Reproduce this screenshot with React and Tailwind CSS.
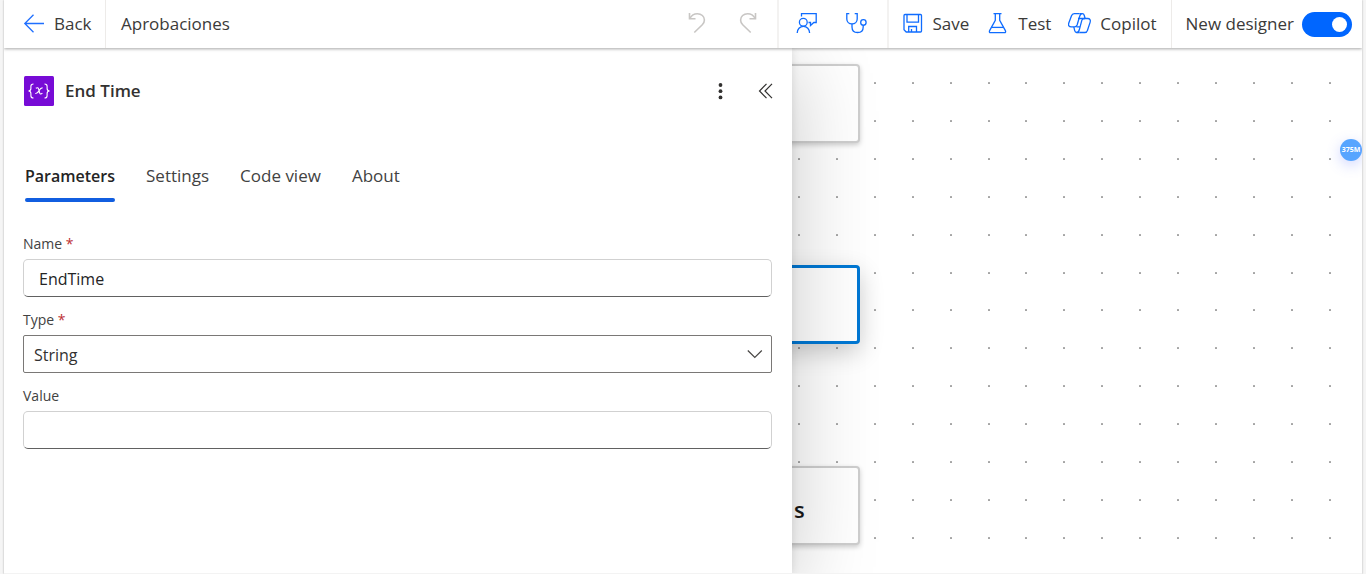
import React, { useState } from 'react';

const TABS = ['Parameters', 'Settings', 'Code view', 'About'];
const GRID_STEP = 37.9;

const Icon = ({ size = 24, className = '', children }) => (
  <svg
    width={size}
    height={size}
    viewBox="0 0 24 24"
    fill="none"
    stroke="currentColor"
    strokeWidth="1.3"
    className={`shrink-0 ${className}`}
    aria-hidden="true"
  >
    {children}
  </svg>
);

const BackIcon = () => (
  <Icon className="text-[#1f6fff]">
    <path d="M22 11.500H2.800M11.500 2.800l-8.700 8.700 8.700 8.700" />
  </Icon>
);

const UndoIcon = () => (
  <Icon>
    <path d="M2.500 1v5.700h6" strokeWidth="1.600" />
    <path d="M2.800 6.500C4.500 3.200 7.300 1.700 10.400 1.700c4 0 7 2.700 7 6.300 0 2-.7 3.400-2.100 4.800L7.300 20.500" strokeWidth="1.600" />
  </Icon>
);

const RedoIcon = () => (
  <Icon>
    <path d="M18.500 1v5.700h-6" strokeWidth="1.600" />
    <path d="M18.200 6.500C16.500 3.200 13.700 1.700 10.600 1.700c-4 0-7 2.700-7 6.300 0 2 .7 3.400 2.100 4.800l8 7.700" strokeWidth="1.600" />
  </Icon>
);

const FeedbackIcon = () => (
  <Icon>
    <path d="M6.500 4.500V1.600h14.700v8.900h-2.400l-3.300 3v-3h-2" />
    <circle cx="8.300" cy="10.300" r="3.900" />
    <path d="M2.200 21c0-3.800 2.700-6.700 6.200-6.700s6.200 2.900 6.200 6.700" />
  </Icon>
);

const CheckerIcon = () => (
  <Icon>
    <path d="M4.300 1.600H1.800v5.400c0 2.900 2.200 4.900 5.200 4.900s5.200-2 5.200-4.900V1.600H9.700" />
    <path d="M7 11.900v3c0 3.400 2.300 5.600 5.600 5.600s5.600-2.200 5.600-5.600v-1.800" />
    <circle cx="18.400" cy="10.400" r="2.700" />
  </Icon>
);

const SaveIcon = () => (
  <Icon>
    <path d="M5 2.500h15.500q1 0 1 1v15.500q0 1-1 1H6.200L4 17.800V3.500q0-1 1-1z" />
    <path d="M7 2.500v7.600h11.500V2.500" />
    <path d="M8.700 20v-5.500h7.800V20M11.500 20v-3" />
  </Icon>
);

const TestIcon = () => (
  <Icon>
    <path d="M7.500 1.700h8M9.300 1.700v6.600L3.500 18.900c-.4.900 0 1.700 1 1.700h14c1 0 1.400-.8 1-1.700L13.700 8.300V1.700" />
    <path d="M5.600 15.400h11.800" />
  </Icon>
);

const CopilotIcon = () => (
  <Icon>
    <path d="M11.500 1.600H6.300c-1.500 0-2.400.7-2.800 2.200L.8 11c-.8 2.400.2 3.900 2.500 3.900h3.300c1.300 0 2.100-.7 2.500-1.900l2.600-8.700c.5-1.700 1.200-2.700 2.600-2.700" />
    <path d="M11.500 1.600h2.800c1.200 0 1.700.7 2 1.900l.8 3" />
    <path d="M11.500 20.500h5.200c1.500 0 2.400-.7 2.800-2.200l2.600-7.900c.8-2.400-.2-3.900-2.500-3.900h-3.300c-1.300 0-2.100.7-2.500 1.900l-2.500 9.400c-.5 1.700-1.200 2.700-2.600 2.700" />
    <path d="M11.500 20.500H8.700c-1.200 0-1.700-.7-2-1.900l-.9-3.700M10 6.500h7M8.500 14.900H12" />
  </Icon>
);

const ToolbarButton = ({ icon, label, className = '' }) => (
  <button type="button" className={`flex items-center gap-2 ${className}`}>
    <span className="text-[#0f6cff]">{icon}</span>
    {label}
  </button>
);

function Header({ newDesigner, setNewDesigner }) {
  return (
    <header className="relative z-20 flex h-12 items-center bg-white text-[17px] text-[#3b3a39] shadow-[0_1px_3px_rgba(0,0,0,0.35)]">
      <button type="button" className="flex h-12 w-[102px] items-center gap-2 border-r border-[#edebe9] pl-[18px]">
        <BackIcon />
        Back
      </button>
      <h1 className="flex-1 pl-[15px]">Aprobaciones</h1>

      <div className="flex h-12 items-center gap-[26px] border-r-2 border-[#f3f2f1] pr-[16px] text-[#c8c6c4]">
        <button type="button" aria-label="Undo" disabled>
          <UndoIcon />
        </button>
        <button type="button" aria-label="Redo" disabled>
          <RedoIcon />
        </button>
      </div>
      <div className="flex h-12 items-center gap-[26px] border-r-2 border-[#f3f2f1] pr-[18px] pl-4 text-[#0f6cff]">
        <button type="button" aria-label="Feedback">
          <FeedbackIcon />
        </button>
        <button type="button" aria-label="Flow checker">
          <CheckerIcon />
        </button>
      </div>
      <div className="flex h-12 items-center gap-[17px] border-r border-[#edebe9] pr-[14px] pl-[11px]">
        <ToolbarButton icon={<SaveIcon />} label="Save" />
        <ToolbarButton icon={<TestIcon />} label="Test" />
        <ToolbarButton icon={<CopilotIcon />} label="Copilot" />
      </div>
      <label className="flex items-center gap-2 pr-[10px] pl-[14px]">
        New designer
        <input
          type="checkbox"
          role="switch"
          checked={newDesigner}
          onChange={(e) => setNewDesigner(e.target.checked)}
          className="h-[25px] w-[50px] appearance-none rounded-full bg-[#8a8886] p-[5px] before:block before:size-[15px] before:rounded-full before:bg-white checked:bg-[#0066ff] checked:before:ml-auto"
        />
      </label>
    </header>
  );
}

function Panel() {
  const [activeTab, setActiveTab] = useState('Parameters');
  const [name, setName] = useState('EndTime');
  const [value, setValue] = useState('');

  const fieldClass =
    'h-[38px] w-full rounded-[5px] border border-[#d1d1d1] border-b-[#616161] bg-white px-[15px] pt-[2px] text-[16px] text-[#242424] outline-none';

  return (
    <section className="relative z-10 w-[58%] shrink-0 bg-white pr-5 pl-[19px] shadow-[0_0_8px_rgba(0,0,0,0.1),0_16px_80px_rgba(0,0,0,0.22)]">
      <div className="flex items-center pt-7">
        <svg width="30" height="30" viewBox="0 0 30 30" className="mr-[11px] ml-px" aria-hidden="true">
          <rect width="30" height="30" rx="1.500" fill="#770bd6" />
          <g fill="none" stroke="#fff" strokeWidth="1.100">
            <path d="M9.500 8c-2.200 0-2.600.8-2.600 2.300v2.300c0 1.500-.7 2.300-2.400 2.400 1.700.1 2.400.9 2.400 2.400v2.300c0 1.500.4 2.300 2.600 2.300" />
            <path d="M20.500 8c2.200 0 2.600.8 2.600 2.300v2.300c0 1.500.7 2.300 2.400 2.400-1.700.1-2.400.9-2.400 2.400v2.300c0 1.500-.4 2.300-2.600 2.300" />
            <path d="M11.800 12.300c1.800-1.200 2.500-.6 3 1.200l.7 2.800c.5 1.900 1.300 2.300 2.900.9M18.600 11.900c-1.900-.2-2.800 1.500-3.600 2.900-1 1.700-1.800 3.100-3.700 2.700" />
          </g>
        </svg>
        <h2 className="flex-1 text-[17px] font-semibold text-[#323130]">End Time</h2>
        <button type="button" aria-label="More commands" className="mr-[26px] text-[#323130]">
          <svg width="20" height="20" viewBox="0 0 20 20" fill="currentColor" aria-hidden="true">
            <circle cx="10.500" cy="4" r="1.900" />
            <circle cx="10.500" cy="10.200" r="1.900" />
            <circle cx="10.500" cy="16.400" r="1.900" />
          </svg>
        </button>
        <button type="button" aria-label="Collapse" className="-mr-1 text-[#323130]">
          <svg width="20" height="20" viewBox="0 0 20 20" fill="none" stroke="currentColor" strokeWidth="1.200" aria-hidden="true">
            <path d="M10.500 2.800L3.500 10l7 7.200M16 2.800L9 10l7 7.200" />
          </svg>
        </button>
      </div>

      <div role="tablist" className="mt-[52px] flex gap-[31px] pl-[2px] text-[17px] text-[#424242]">
        {TABS.map((tab) => (
          <button
            key={tab}
            type="button"
            role="tab"
            aria-selected={activeTab === tab}
            onClick={() => setActiveTab(tab)}
            className={
              activeTab === tab
                ? 'flex h-11 flex-col justify-between text-[16px] font-semibold text-[#242424] after:block after:h-1 after:w-full after:rounded-full after:bg-[#115ee0]'
                : 'flex h-11 flex-col'
            }
          >
            <span className="pt-[6px] leading-6">{tab}</span>
          </button>
        ))}
      </div>

      <form className="mt-8 flex flex-col gap-[13px] text-[14px] leading-5 text-[#424242]">
        <div>
          <label htmlFor="name" className="mb-[5px] block">
            Name <span className="text-[#bc2f32]">*</span>
          </label>
          <input id="name" value={name} onChange={(e) => setName(e.target.value)} className={fieldClass} />
        </div>
        <div>
          <label htmlFor="type" className="mb-[5px] block">
            Type <span className="text-[#bc2f32]">*</span>
          </label>
          <div className="relative">
            <select
              id="type"
              defaultValue="String"
              className="block h-[38px] w-full appearance-none rounded-[2px] border border-[#7a7876] bg-white px-[10px] pt-[2px] text-[16px] text-[#323130] outline-none"
            >
              <option>String</option>
              <option>Integer</option>
              <option>Boolean</option>
            </select>
            <svg
              width="16"
              height="16"
              viewBox="0 0 16 16"
              fill="none"
              stroke="#484644"
              strokeWidth="1.200"
              className="pointer-events-none absolute top-[11px] right-[9px]"
              aria-hidden="true"
            >
              <path d="M.8 4.500l7 7 7-7" />
            </svg>
          </div>
        </div>
        <div>
          <label htmlFor="value" className="mb-[5px] block">
            Value
          </label>
          <input id="value" value={value} onChange={(e) => setValue(e.target.value)} className={fieldClass} />
        </div>
      </form>
    </section>
  );
}

function Canvas() {
  const dots = [];
  for (let row = 0; row < 14; row++) {
    for (let col = 0; col < 15; col++) {
      dots.push({ x: Math.round(6 + col * GRID_STEP), y: Math.round(34 + row * GRID_STEP) });
    }
  }

  return (
    <main className="relative min-w-0 flex-1 overflow-hidden bg-white">
      <svg className="absolute inset-0 size-full" fill="#a3a3a3" aria-hidden="true">
        {dots.map((dot) => (
          <rect key={`${dot.x}-${dot.y}`} x={dot.x} y={dot.y} width="2" height="2" rx="0.500" />
        ))}
      </svg>
      <div className="absolute top-4 -left-48 h-[79px] w-[260px] rounded-[4px] border-2 border-[#cecece] bg-white shadow-[0_2px_5px_rgba(0,0,0,0.2)]" />
      <div className="absolute top-[217px] -left-48 h-[79px] w-[260px] rounded-[4px] border-3 border-[#0078d4] bg-white shadow-[0_8px_24px_rgba(0,0,0,0.2)]" />
      <div className="absolute top-[418px] -left-48 flex h-[79px] w-[260px] items-center justify-end rounded-[4px] border-2 border-[#cecece] bg-white pt-2 pr-[53px] text-[22px] font-semibold text-[#1b1a19] shadow-[0_2px_5px_rgba(0,0,0,0.2)]">
        s
      </div>
    </main>
  );
}

export default function App() {
  const [newDesigner, setNewDesigner] = useState(true);

  return (
    <div className="min-h-screen bg-[#f5f5f5] px-1 font-['Open_Sans','Noto_Sans',sans-serif]">
      <div className="relative flex min-h-screen flex-col overflow-hidden border-b border-[#f3f3f3] bg-white shadow-[0_0_2px_rgba(0,0,0,0.3)]">
        <Header newDesigner={newDesigner} setNewDesigner={setNewDesigner} />
        <div className="flex flex-1">
          <Panel />
          <Canvas />
        </div>
        <div className="absolute top-[139px] right-0 z-30 flex size-[22px] items-center justify-center rounded-full bg-[#57a5ff] text-[7px] font-bold text-white shadow-[0_4px_14px_rgba(100,120,255,0.3)]">
          375M
        </div>
      </div>
    </div>
  );
}
